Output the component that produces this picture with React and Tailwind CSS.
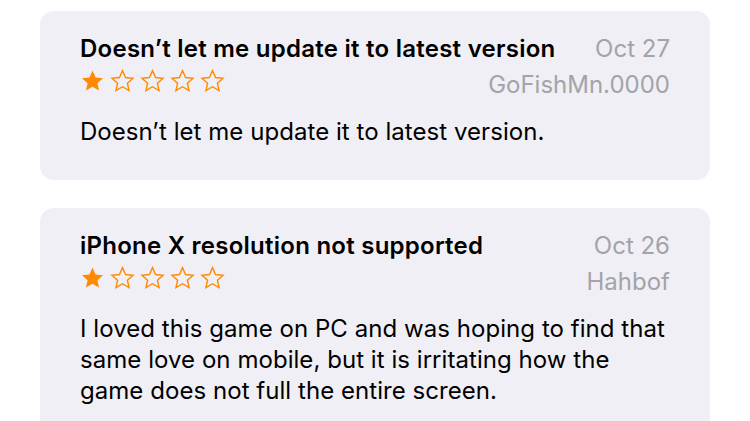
import React from 'react';

const reviews = [
  {
    title: 'Doesn’t let me update it to latest version',
    date: 'Oct 27',
    author: 'GoFishMn.0000',
    rating: 1,
    body: ['Doesn’t let me update it to latest version.'],
  },
  {
    title: 'iPhone X resolution not supported',
    date: 'Oct 26',
    author: 'Hahbof',
    rating: 1,
    body: [
      'I loved this game on PC and was hoping to find that',
      'same love on mobile, but it is irritating how the',
      'game does not full the entire screen.',
    ],
  },
];

function Star({ filled }) {
  return (
    <svg width="25" height="24" viewBox="0 0 24 24" className="shrink-0">
      <path
        d="M12 1.6l3.05 6.9 7.5.72-5.65 5 1.65 7.38L12 17.75 5.45 21.6 7.1 14.22l-5.65-5 7.5-.72z"
        fill={filled ? '#ff8a00' : 'none'}
        stroke="#ff8a00"
        strokeWidth={filled ? 0 : 1.4}
        strokeLinejoin="miter"
      />
    </svg>
  );
}

function ReviewCard({ review }) {
  return (
    <div className="rounded-[14px] bg-[#efeff5] px-10 pt-[20px] pb-[33px]">
      <div className="flex justify-between items-start gap-6 text-[24px] leading-[36px]">
        <div className="font-semibold text-black truncate tracking-[0.25px]">{review.title}</div>
        <div className="text-[#a3a3a8] shrink-0">{review.date}</div>
      </div>
      <div className="flex justify-between items-start gap-6 text-[24px] leading-[36px]">
        <div className="flex gap-[5px] mt-[2px]">
          {[1, 2, 3, 4, 5].map((n) => (
            <Star key={n} filled={n <= review.rating} />
          ))}
        </div>
        <div className="text-[#a3a3a8] shrink-0">{review.author}</div>
      </div>
      <div className="mt-[13px] text-[24px] leading-[31px] text-black tracking-[0.05px]">
        {review.body.map((line) => (
          <div key={line} className="whitespace-nowrap">{line}</div>
        ))}
      </div>
    </div>
  );
}

export default function App() {
  return (
    <div
      className="w-[750px] h-[421px] overflow-hidden bg-white px-10 pt-[11px] flex flex-col gap-[28px]"
      style={{ fontFamily: 'Inter, "Noto Sans", sans-serif' }}
    >
      {reviews.map((r) => (
        <ReviewCard key={r.date} review={r} />
      ))}
    </div>
  );
}
